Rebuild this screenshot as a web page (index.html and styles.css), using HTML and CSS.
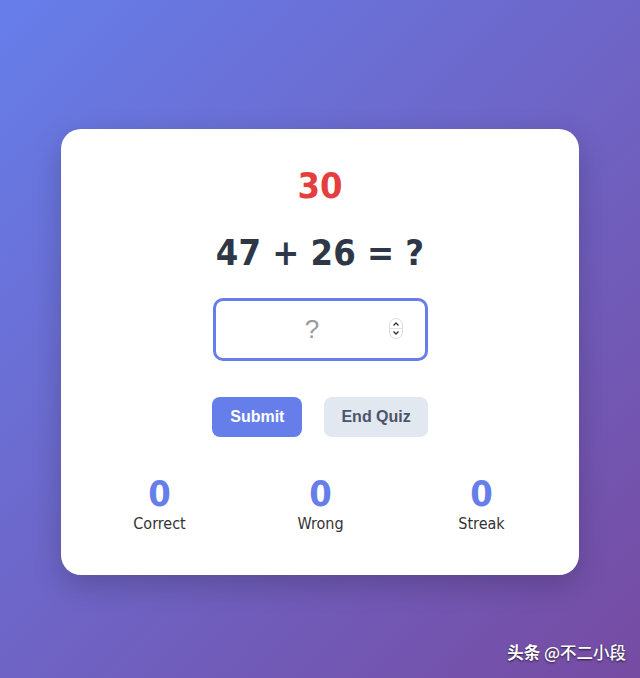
FILE: index.html
```html
<!DOCTYPE html>
<html lang="en">
<head>
<meta charset="utf-8">
<title>Math Quiz</title>
<link rel="stylesheet" href="styles.css">
</head>
<body>
<div class="card">
  <div class="timer">30</div>
  <div class="question">47 + 26 = ?</div>
  <div class="answer-row">
    <div class="answer-wrap">
      <input class="answer" type="number" placeholder="?" autofocus>
      <svg class="spinner" width="14" height="21" viewBox="0 0 14 21" aria-hidden="true">
        <rect x="0.5" y="0.5" width="13" height="20" rx="6.5" fill="#ffffff" stroke="#dcdcdc"/>
        <line x1="1" y1="10.5" x2="13" y2="10.5" stroke="#e2e2e2"/>
        <path d="M4.5 7.5 L7 5 L9.5 7.5" fill="none" stroke="#333" stroke-width="1.3"/>
        <path d="M4.5 13.5 L7 16 L9.5 13.5" fill="none" stroke="#333" stroke-width="1.3"/>
      </svg>
    </div>
  </div>
  <div class="buttons">
    <button class="btn btn-primary">Submit</button>
    <button class="btn btn-secondary">End Quiz</button>
  </div>
  <div class="stats">
    <div class="stat"><div class="stat-value">0</div><div class="stat-label">Correct</div></div>
    <div class="stat"><div class="stat-value">0</div><div class="stat-label">Wrong</div></div>
    <div class="stat"><div class="stat-value">0</div><div class="stat-label">Streak</div></div>
  </div>
</div>
<div class="watermark"><b>头条</b> @不二小段</div>
</body>
</html>
```
FILE: styles.css
```css
html, body {
  margin: 0;
  padding: 0;
}
body {
  min-height: 678px;
  background: linear-gradient(135deg, #667eea 0%, #764ba2 100%);
  font-family: "DejaVu Sans Condensed", "DejaVu Sans", sans-serif;
  overflow: hidden;
  padding-top: 129px;
  box-sizing: border-box;
}
.card {
  width: 518px;
  box-sizing: border-box;
  margin: 0 auto;
  background: #ffffff;
  border-radius: 20px;
  padding: 36px 40px 42px;
  box-shadow: 0 10px 30px rgba(0, 0, 0, 0.2);
  text-align: center;
}
.timer {
  font-size: 36px;
  font-weight: bold;
  color: #e53e3e;
  margin-bottom: 26px;
}
.question {
  font-size: 36px;
  font-weight: bold;
  color: #2d3748;
  margin-bottom: 25px;
}
.answer-row {
  display: flex;
  justify-content: center;
  margin-bottom: 36px;
}
.answer-wrap {
  position: relative;
  width: 215px;
  height: 63px;
}
.answer {
  display: block;
  width: 215px;
  height: 63px;
  box-sizing: border-box;
  margin: 0;
  border: 3px solid #667eea;
  border-radius: 10px;
  outline: none;
  text-align: center;
  font-family: "Liberation Sans", Arial, sans-serif;
  font-size: 26px;
  color: #2d3748;
  padding: 0 28px 0 12px;
  caret-color: #93b4f5;
  -moz-appearance: textfield;
  appearance: textfield;
}
.answer::-webkit-outer-spin-button,
.answer::-webkit-inner-spin-button {
  -webkit-appearance: none;
  margin: 0;
}
.answer::placeholder {
  color: #9a9a9a;
}
.spinner {
  position: absolute;
  left: 176px;
  top: 20px;
}
.buttons {
  display: flex;
  justify-content: center;
  gap: 22px;
  margin-bottom: 36px;
}
.btn {
  height: 40px;
  padding: 0 18px;
  border: none;
  border-radius: 8px;
  font-family: "Liberation Sans", Arial, sans-serif;
  font-size: 16px;
  font-weight: bold;
  cursor: pointer;
}
.btn-primary {
  background: #667eea;
  color: #ffffff;
}
.btn-secondary {
  background: #e2e8f0;
  color: #4a5568;
  padding: 0 17px;
}
.stats {
  margin: 0 -23px 0 -22px;
  display: grid;
  grid-template-columns: repeat(3, 1fr);
}
.stat-value {
  font-size: 36px;
  font-weight: bold;
  color: #667eea;
}
.stat-label {
  font-size: 16px;
  color: #333333;
}
.watermark {
  position: absolute;
  right: 14px;
  bottom: 14px;
  color: #ffffff;
  font-family: "Noto Sans CJK SC", sans-serif;
  font-size: 16.5px;
  font-weight: 500;
  text-shadow: 0 1px 2px rgba(0, 0, 0, 0.7);
}
.watermark b {
  font-weight: 700;
}
```
